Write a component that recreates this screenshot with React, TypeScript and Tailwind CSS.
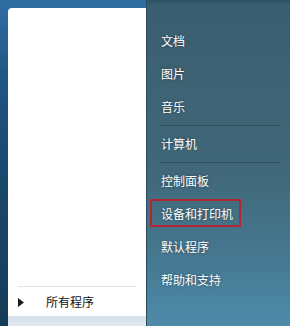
import React from 'react';

const font = { fontFamily: '"Noto Sans CJK SC", "Noto Sans", sans-serif' };

type Entry = { label: string; sep?: boolean; active?: boolean };

const entries: Entry[] = [
  { label: '文档' },
  { label: '图片' },
  { label: '音乐', sep: true },
  { label: '计算机', sep: true },
  { label: '控制面板' },
  { label: '设备和打印机', active: true },
  { label: '默认程序' },
  { label: '帮助和支持' },
];

const MenuItem: React.FC<{ item: Entry }> = ({ item }) => (
  <>
    <div className="h-[33px] flex items-center">
      <div
        className={`h-[28px] flex items-center pl-[9px] pr-[6px] border-2 ${
          item.active ? 'border-[#b3262f] mt-[-2px]' : 'border-transparent'
        }`}
      >
        <span
          className={`text-[12px] leading-none text-white [text-shadow:0_0_3px_rgba(0,0,0,0.45)] ${
            item.active ? 'mt-[3px]' : ''
          }`}
        >
          {item.label}
        </span>
      </div>
    </div>
    {item.sep && (
      <div className="h-[4px] flex items-center pl-[10px] pr-[10px]">
        <div className="h-px w-full bg-[#5b7f8f] border-b border-[#2f5262]" />
      </div>
    )}
  </>
);

export default function App() {
  return (
    <div className="w-[290px] h-[326px] flex overflow-hidden" style={font}>
      {/* Left frame + white program list */}
      <div className="w-[146px] h-full flex flex-col pl-[8px] pt-[8px] bg-[linear-gradient(to_bottom,#2f6ea3_0%,#1f5583_25%,#194769_60%,#163b58_100%)]">
        <div className="flex-1 bg-white rounded-tl-[4px] flex flex-col justify-end">
          <div className="mx-[10px] h-px bg-[#dfe4ea] mb-[5px]" />
          <div className="h-[20px] flex items-center pl-[10px] mb-[4px]">
            <svg width="6" height="9" viewBox="0 0 6 9" className="mr-[22px]">
              <path d="M0 0 L6 4.5 L0 9 Z" fill="#1a1a1a" />
            </svg>
            <span className="text-[12px] leading-none text-[#111]">所有程序</span>
          </div>
        </div>
        <div className="h-[10px] bg-[linear-gradient(to_bottom,#d5e0ea,#e2eaf2)]" />
      </div>

      {/* Right links column */}
      <div className="flex-1 h-full border-l border-[#2a4b5c] flex flex-col pl-[3px] pt-[24px] bg-[linear-gradient(to_bottom,#2c5166_0px,#3a5e70_5px,#3e6374_30%,#41697b_55%,#467992_80%,#4d8ba9_100%)]">
        {entries.map((e) => (
          <MenuItem key={e.label} item={e} />
        ))}
      </div>
    </div>
  );
}
